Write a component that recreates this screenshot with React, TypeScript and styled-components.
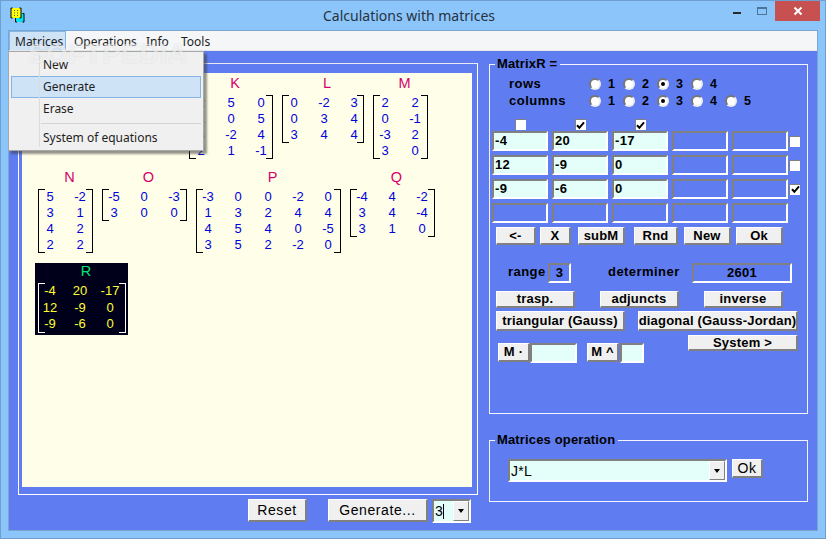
import React from "react";
import styled, { createGlobalStyle } from "styled-components";

const Global = createGlobalStyle`
  html, body { margin: 0; padding: 0; width: 826px; height: 539px; overflow: hidden; background: #8cc5fa; }
  * { box-sizing: border-box; }
`;

const LEGACY = `"Liberation Sans", Arial, sans-serif`;
const UI = `"Noto Sans", "Open Sans", sans-serif`;
const BLUE = "#5f7df0";

const Window = styled.div`
  position: relative;
  width: 826px;
  height: 539px;
  background: #8cc5fa;
  border: 1px solid #6f9fce;
  display: flex;
  flex-direction: column;
`;
const TitleBar = styled.div`
  position: relative;
  height: 29px;
  flex: none;
  display: flex;
  align-items: flex-start;
  padding-left: 9px;
`;
const AppIcon = styled.svg`
  width: 16px;
  height: 16px;
  margin-top: 6px;
  flex: none;
`;
const TitleText = styled.div`
  position: absolute;
  left: 0;
  right: 8px;
  top: 5px;
  text-align: center;
  font: 14px/20px ${UI};
  color: #26323f;
`;
const Controls = styled.div`
  margin-left: auto;
  display: flex;
  align-items: flex-start;
  margin-right: 5px;
`;
const Ctl = styled.div<{ $w: number; $danger?: boolean }>`
  width: ${(p) => p.$w}px;
  height: 20px;
  display: flex;
  align-items: center;
  justify-content: center;
  background: ${(p) => (p.$danger ? "#c75050" : "transparent")};
`;
const Client = styled.div`
  position: relative;
  flex: 1;
  margin: 0 7px 7px 7px;
  background: ${BLUE};
  border: 1px solid #7aa6d2;
  display: flex;
  flex-direction: column;
  min-height: 0;
`;
const MenuBar = styled.div`
  height: 20px;
  flex: none;
  background: #f5f6f7;
  border-bottom: 1px solid #e6e7e8;
  display: flex;
  align-items: stretch;
`;
const MenuTop = styled.div<{ $active?: boolean; $w: number }>`
  width: ${(p) => p.$w}px;
  font: 12px/20px ${UI};
  color: #1e1e1e;
  padding-left: ${(p) => (p.$active ? 5 : 7)}px;
  background: ${(p) => (p.$active ? "#cfe3f7" : "transparent")};
  border: ${(p) => (p.$active ? "1px solid #84b5e6" : "1px solid transparent")};
  border-bottom: none;
`;
const Dropdown = styled.div`
  position: absolute;
  left: -1px;
  top: 20px;
  width: 196px;
  height: 100px;
  background: #f0f0f0;
  border: 1px solid #a8a8a8;
  box-shadow: 3px 3px 2px rgba(60, 60, 60, 0.55);
  padding: 2px;
  display: flex;
  flex-direction: column;
  z-index: 5;
  &::before {
    content: "";
    position: absolute;
    left: 30px;
    top: 2px;
    bottom: 3px;
    width: 1px;
    background: #dcdcdc;
  }
`;
const DropItem = styled.div<{ $active?: boolean }>`
  height: 22px;
  flex: none;
  font: 12px/20px ${UI};
  color: #1e1e1e;
  padding-left: 31px;
  border: 1px solid ${(p) => (p.$active ? "#84b5e6" : "transparent")};
  background: ${(p) => (p.$active ? "#cfe3f7" : "transparent")};
`;
const DropSep = styled.div`
  height: 1px;
  flex: none;
  margin: 3px 0 3px 30px;
  background: #d4d4d4;
`;
const Watermark = styled.div`
  position: absolute;
  left: 27px;
  top: 38px;
  font: bold 27px/30px ${LEGACY};
  letter-spacing: 0.6px;
  color: rgba(255, 255, 255, 0.55);
  text-shadow: 0 0 2px rgba(0, 0, 0, 0.1);
  pointer-events: none;
  z-index: 9;
`;
const Body = styled.div`
  flex: 1;
  display: flex;
  align-items: flex-start;
  padding-left: 9px;
  gap: 11px;
`;
const LeftCol = styled.div`
  width: 460px;
  margin-top: 12px;
  flex: none;
`;
const Panel = styled.div`
  height: 432px;
  border: 1px solid #fff;
  border-top-color: #e9e9ee;
  padding: 9px 5px 7px 3px;
`;
const Canvas = styled.div`
  height: 100%;
  background: #fffee8;
  padding: 2px 0 0 16px;
  display: flex;
  flex-direction: column;
  gap: 10px;
`;
const MatrixRow = styled.div<{ $indent?: number }>`
  display: flex;
  align-items: flex-start;
  gap: 9px;
  margin-left: ${(p) => p.$indent ?? 0}px;
`;
const MatrixBox = styled.div``;
const MatrixName = styled.div<{ $c: string }>`
  height: 16px;
  margin-bottom: 4px;
  text-align: center;
  padding-left: 8px;
  font: 14.5px/16px ${LEGACY};
  color: ${(p) => p.$c};
`;
const Bracket = styled.div<{ $n: number; $line: string; $c: string; $pr?: number; $w?: number; $rh?: number }>`
  position: relative;
  display: grid;
  grid-template-columns: repeat(${(p) => p.$n}, 22px);
  grid-auto-rows: ${(p) => p.$rh ?? 16}px;
  column-gap: 8px;
  padding: 0 ${(p) => p.$pr ?? 2}px 0 1px;
  ${(p) => (p.$w ? `width: ${p.$w}px;` : "")}
  color: ${(p) => p.$c};
  &::before,
  &::after {
    content: "";
    position: absolute;
    top: 0;
    bottom: 0;
    width: 6px;
    border: 1px solid ${(p) => p.$line};
  }
  &::before { left: 0; border-right: none; }
  &::after { right: 0; border-left: none; }
`;
const Num = styled.div`
  font: 13px/16px ${LEGACY};
  text-align: center;
`;
const ResultCard = styled.div`
  align-self: flex-start;
  background: #00001a;
  margin-left: -3px;
  padding: 0 2px 2px 3px;
`;
const Footer = styled.div`
  display: flex;
  align-items: flex-start;
  padding-left: 230px;
  margin-top: 4px;
`;
const Btn = styled.div<{ $w: number; $h?: number; $ml?: number; $plain?: boolean }>`
  width: ${(p) => p.$w}px;
  height: ${(p) => p.$h ?? 18}px;
  margin-left: ${(p) => p.$ml ?? 0}px;
  flex: none;
  background: #f0f0f0;
  border-top: 1px solid #fff;
  border-left: 1px solid #fff;
  border-right: 2px solid #808080;
  border-bottom: 2px solid #808080;
  display: flex;
  align-items: center;
  justify-content: center;
  font: ${(p) => (p.$plain ? "normal 14px" : "bold 13px")} / 14px ${LEGACY};
  letter-spacing: ${(p) => (p.$plain ? "0.6px" : "0.2px")};
  color: #000;
  white-space: nowrap;
`;
const Sunken = styled.div<{ $w: number; $h?: number; $fill?: boolean; $ml?: number; $center?: boolean }>`
  width: ${(p) => p.$w}px;
  height: ${(p) => p.$h ?? 20}px;
  margin-left: ${(p) => p.$ml ?? 0}px;
  flex: none;
  background: ${(p) => (p.$fill ? "#e4fffa" : "transparent")};
  border-top: 2px solid #808080;
  border-left: 2px solid #808080;
  border-right: 2px solid #fff;
  border-bottom: 2px solid #fff;
  display: flex;
  align-items: center;
  justify-content: ${(p) => (p.$center ? "center" : "flex-start")};
  padding-left: ${(p) => (p.$center ? 0 : 1)}px;
  font: bold 13px/16px ${LEGACY};
  letter-spacing: 0.3px;
  color: #000;
  overflow: hidden;
`;
const Combo = styled(Sunken)`
  position: relative;
  font: normal 14px/16px ${LEGACY};
`;
const ComboArrow = styled.div`
  margin-left: auto;
  width: 16px;
  height: 100%;
  flex: none;
  background: #f0f0f0;
  border-top: 1px solid #fff;
  border-left: 1px solid #fff;
  border-right: 1px solid #808080;
  border-bottom: 1px solid #808080;
  display: flex;
  align-items: center;
  justify-content: center;
  &::after {
    content: "";
    border-left: 3.5px solid transparent;
    border-right: 3.5px solid transparent;
    border-top: 4px solid #000;
  }
`;
const Caret = styled.span`
  display: inline-block;
  width: 1px;
  height: 15px;
  background: #000;
`;
const RightCol = styled.div`
  width: 319px;
  margin-top: 5px;
  flex: none;
  display: flex;
  flex-direction: column;
  gap: 18px;
`;
const Fieldset = styled.fieldset<{ $h: number }>`
  margin: 0;
  padding: 0;
  min-width: 0;
  height: ${(p) => p.$h}px;
  border: 1px solid #f2f4ff;
`;
const Legend = styled.legend`
  margin-left: 5px;
  padding: 0 3px 0 2px;
  height: 16px;
  font: bold 13px/16px ${LEGACY};
  letter-spacing: 0.15px;
  color: #000;
`;
const RadioRow = styled.div<{ $mt: number }>`
  display: flex;
  align-items: center;
  height: 16px;
  padding-left: 19px;
  margin-top: ${(p) => p.$mt}px;
`;
const RadioLabel = styled.div`
  width: 80px;
  font: bold 13px/16px ${LEGACY};
  letter-spacing: 0.5px;
  color: #000;
`;
const RadioItem = styled.div`
  width: 34px;
  display: flex;
  align-items: center;
  gap: 7px;
  font: bold 12.5px/16px ${LEGACY};
  color: #000;
`;
const RadioDot = styled.div<{ $on?: boolean }>`
  width: 12px;
  height: 12px;
  border-radius: 50%;
  background: #fff;
  border: 2px solid;
  border-color: #777 #eee #eee #777;
  display: flex;
  align-items: center;
  justify-content: center;
  &::after {
    content: "";
    display: ${(p) => (p.$on ? "block" : "none")};
    width: 4px;
    height: 4px;
    border-radius: 50%;
    background: #000;
  }
`;
const CellGrid = styled.div`
  display: grid;
  grid-template-columns: repeat(5, 56px) 11px;
  grid-template-rows: 8px;
  grid-auto-rows: 20px;
  gap: 4px;
  margin: 10px 0 0 2px;
`;
const ColHead = styled.div`
  display: flex;
  justify-content: center;
  height: 8px;
`;
const Check = styled.div<{ $on?: boolean; $side?: boolean }>`
  width: 11px;
  height: 11px;
  background: #fff;
  border-top: 1px solid #808080;
  border-left: 1px solid #808080;
  align-self: ${(p) => (p.$side ? "center" : "flex-start")};
  margin-left: ${(p) => (p.$side ? "-3px" : "0")};
  display: flex;
  align-items: center;
  justify-content: center;
  flex: none;
`;
const Row = styled.div<{ $mt: number; $pl?: number; $h?: number }>`
  display: flex;
  align-items: flex-start;
  margin-top: ${(p) => p.$mt}px;
  padding-left: ${(p) => p.$pl ?? 6}px;
  ${(p) => (p.$h ? `height: ${p.$h}px;` : "")}
`;
const InfoLabel = styled.div<{ $w: number; $ml?: number }>`
  width: ${(p) => p.$w}px;
  margin-left: ${(p) => p.$ml ?? 0}px;
  height: 20px;
  font: bold 13px/18px ${LEGACY};
  letter-spacing: 0.45px;
  color: #000;
  white-space: nowrap;
  flex: none;
`;
const BottomLeft = styled.div`
  display: flex;
  align-items: flex-start;
  margin-top: 8px;
`;

const CheckMark = () => (
  <svg width="9" height="9" viewBox="0 0 9 9">
    <path d="M1 4.2 L3.4 6.8 L8 1.4" fill="none" stroke="#000" strokeWidth="2" />
  </svg>
);

type M = { name: string; rows: number[][]; width?: number };
const PINK = "#d6006e";

const Matrix = ({ name, rows, width }: M) => (
  <MatrixBox>
    <MatrixName $c={PINK}>{name}</MatrixName>
    <Bracket $n={rows[0].length} $line="#000" $c="#0000dc" $w={width}>
      {rows.flat().map((v, i) => (
        <Num key={i}>{v}</Num>
      ))}
    </Bracket>
  </MatrixBox>
);

const row1: M[] = [
  { name: "K", width: 84, rows: [[2, 5, 0], [1, 0, 5], [3, -2, 4], [2, 1, -1]] },
  { name: "L", width: 82, rows: [[0, -2, 3], [0, 3, 4], [3, 4, 4]] },
  { name: "M", rows: [[2, 2], [0, -1], [-3, 2], [3, 0]] },
];
const row2: M[] = [
  { name: "N", rows: [[5, -2], [3, 1], [4, 2], [2, 2]] },
  { name: "O", rows: [[-5, 0, -3], [3, 0, 0]] },
  { name: "P", rows: [[-3, 0, 0, -2, 0], [1, 3, 2, 4, 4], [4, 5, 4, 0, -5], [3, 5, 2, -2, 0]] },
  { name: "Q", rows: [[-4, 4, -2], [3, 4, -4], [3, 1, 0]] },
];
const result = [[-4, 20, -17], [12, -9, 0], [-9, -6, 0]];

const grid: (string | null)[][] = [
  ["-4", "20", "-17", null, null],
  ["12", "-9", "0", null, null],
  ["-9", "-6", "0", null, null],
  [null, null, null, null, null],
];

export default function App() {
  return (
    <>
      <Global />
      <Window>
        <TitleBar>
          <AppIcon viewBox="0 0 16 16">
            <rect x="5" y="6" width="9" height="9" fill="#00e6f0" />
            <path d="M7 6.5H5.5V15H7M12.5 6.5H14V15H12.5" fill="none" stroke="#000" />
            <rect x="1" y="1" width="10" height="10" fill="#ffff00" />
            <path d="M2.5 1H1V11H2.5M9.5 1H11V11H9.5" fill="none" stroke="#000" />
            <path d="M4 3.5h1M7 3.5h1M4 6h1M7 6h1M4 8.5h1M7 8.5h1" stroke="#555" />
          </AppIcon>
          <TitleText>Calculations with matrices</TitleText>
          <Controls>
            <Ctl $w={24}>
              <svg width="10" height="10" viewBox="0 0 10 10">
                <rect x="1" y="6" width="8" height="2" fill="#2a2a2a" />
              </svg>
            </Ctl>
            <Ctl $w={26}>
              <svg width="12" height="12" viewBox="0 0 12 12">
                <rect x="1.5" y="2.5" width="9" height="7" fill="none" stroke="#4f7396" />
                <rect x="1" y="2" width="10" height="2" fill="#4f7396" />
              </svg>
            </Ctl>
            <Ctl $w={45} $danger>
              <svg width="10" height="10" viewBox="0 0 10 10">
                <path d="M1.5 1.5 L8.5 8.5 M8.5 1.5 L1.5 8.5" stroke="#fff" strokeWidth="2" />
              </svg>
            </Ctl>
          </Controls>
        </TitleBar>
        <Client>
          <MenuBar>
            <MenuTop $active $w={57}>Matrices</MenuTop>
            <MenuTop $w={72}>Operations</MenuTop>
            <MenuTop $w={35}>Info</MenuTop>
            <MenuTop $w={50}>Tools</MenuTop>
          </MenuBar>
          <Dropdown>
            <DropItem>New</DropItem>
            <DropItem $active>Generate</DropItem>
            <DropItem>Erase</DropItem>
            <DropSep />
            <DropItem>System of equations</DropItem>
          </Dropdown>
          <Body>
            <LeftCol>
              <Panel>
                <Canvas>
                  <MatrixRow $indent={151}>
                    {row1.map((m) => (
                      <Matrix key={m.name} {...m} />
                    ))}
                  </MatrixRow>
                  <MatrixRow>
                    {row2.map((m) => (
                      <Matrix key={m.name} {...m} />
                    ))}
                  </MatrixRow>
                  <ResultCard>
                    <MatrixName $c="#00e676">R</MatrixName>
                    <Bracket $n={3} $line="#fff" $c="#ffff33" $pr={5} $rh={16.5}>
                      {result.flat().map((v, i) => (
                        <Num key={i}>{v}</Num>
                      ))}
                    </Bracket>
                  </ResultCard>
                </Canvas>
              </Panel>
              <Footer>
                <Btn $w={59} $h={23} $plain>Reset</Btn>
                <Btn $w={100} $h={23} $ml={21} $plain>Generate...</Btn>
                <Combo $w={39} $h={24} $fill $ml={4}>
                  3<Caret />
                  <ComboArrow />
                </Combo>
              </Footer>
            </LeftCol>
            <RightCol>
              <Fieldset $h={358}>
                <Legend>MatrixR =</Legend>
                <RadioRow $mt={4}>
                  <RadioLabel>rows</RadioLabel>
                  {[1, 2, 3, 4].map((n) => (
                    <RadioItem key={n}>
                      <RadioDot $on={n === 3} />
                      {n}
                    </RadioItem>
                  ))}
                </RadioRow>
                <RadioRow $mt={1}>
                  <RadioLabel>columns</RadioLabel>
                  {[1, 2, 3, 4, 5].map((n) => (
                    <RadioItem key={n}>
                      <RadioDot $on={n === 3} />
                      {n}
                    </RadioItem>
                  ))}
                </RadioRow>
                <CellGrid>
                  {[false, true, true].map((on, i) => (
                    <ColHead key={i}>
                      <Check>{on && <CheckMark />}</Check>
                    </ColHead>
                  ))}
                  <ColHead />
                  <ColHead />
                  <ColHead />
                  {grid.map((r, ri) => (
                    <React.Fragment key={ri}>
                      {r.map((v, ci) => (
                        <Sunken key={ci} $w={56} $fill={v !== null}>
                          {v}
                        </Sunken>
                      ))}
                      {ri < 3 ? (
                        <Check $side>{ri === 2 && <CheckMark />}</Check>
                      ) : (
                        <div />
                      )}
                    </React.Fragment>
                  ))}
                </CellGrid>
                <Row $mt={4}>
                  <Btn $w={40}>&lt;-</Btn>
                  <Btn $w={31} $ml={4}>X</Btn>
                  <Btn $w={47} $ml={7}>subM</Btn>
                  <Btn $w={44} $ml={9}>Rnd</Btn>
                  <Btn $w={47} $ml={6}>New</Btn>
                  <Btn $w={47} $ml={5}>Ok</Btn>
                </Row>
                <Row $mt={18} $pl={18}>
                  <InfoLabel $w={40}>range</InfoLabel>
                  <Sunken $w={23} $center>3</Sunken>
                  <InfoLabel $w={84} $ml={37}>determiner</InfoLabel>
                  <Sunken $w={100} $center>2601</Sunken>
                </Row>
                <Row $mt={8}>
                  <Btn $w={79} $h={17}>trasp.</Btn>
                  <Btn $w={79} $h={17} $ml={25}>adjuncts</Btn>
                  <Btn $w={79} $h={17} $ml={25}>inverse</Btn>
                </Row>
                <Row $mt={3}>
                  <Btn $w={129} $h={20}>triangular (Gauss)</Btn>
                  <Btn $w={160} $h={20} $ml={13}>diagonal (Gauss-Jordan)</Btn>
                </Row>
                <Row $mt={4} $pl={8} $h={28}>
                  <BottomLeft>
                    <Btn $w={32} $h={19}>M ·</Btn>
                    <Sunken $w={47} $fill />
                    <Btn $w={32} $h={19} $ml={10}>M ^</Btn>
                    <Sunken $w={24} $fill $ml={1} />
                  </BottomLeft>
                  <Btn $w={110} $h={16} $ml={44}>System &gt;</Btn>
                </Row>
              </Fieldset>
              <Fieldset $h={70}>
                <Legend>Matrices operation</Legend>
                <Row $mt={11} $pl={18}>
                  <Combo $w={219} $h={23} $fill>
                    J*L
                    <ComboArrow />
                  </Combo>
                  <Btn $w={31} $h={19} $ml={5} $plain>Ok</Btn>
                </Row>
              </Fieldset>
            </RightCol>
          </Body>
        </Client>
        <Watermark>SOFTPEDIA</Watermark>
      </Window>
    </>
  );
}
